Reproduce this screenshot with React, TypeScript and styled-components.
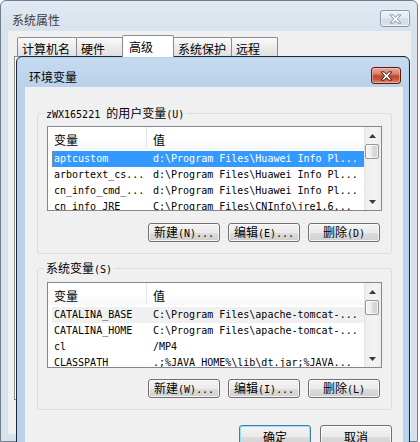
import React from "react";
import styled, { createGlobalStyle, css } from "styled-components";

const HAN = `"Noto Sans CJK SC", "Noto Sans CJK JP", sans-serif`;
const MONO = `"DejaVu Sans Mono", "Liberation Mono", "Noto Sans CJK SC", monospace`;

const GlobalStyle = createGlobalStyle`
  html, body { margin: 0; padding: 0; background: #ffffff; }
  body { font-family: ${HAN}; }
  * { box-sizing: border-box; }
`;

const Desktop = styled.div`
  position: relative;
  width: 420px;
  height: 442px;
  overflow: hidden;
  background: #ffffff;
`;

const windowBase = css`
  position: absolute;
  display: flex;
  flex-direction: column;
  border-radius: 6px 6px 0 0;
`;

const OuterWindow = styled.div`
  ${windowBase};
  left: 0;
  top: 0;
  width: 418px;
  height: 442px;
  border: 1px solid #6f7d8e;
  background: linear-gradient(#e2e9f2, #d8e2ed 30px, #d8e2ed);
`;

const DialogWindow = styled.div`
  ${windowBase};
  left: 16px;
  top: 56px;
  width: 394px;
  height: 440px;
  border: 1px solid #1c2b3a;
  background: linear-gradient(#c6daef, #bad2eb 30px, #bad2eb);
  box-shadow: inset 0 0 0 1px #a9d3ee;
`;

const TitleBar = styled.div`
  height: 30px;
  flex-shrink: 0;
  display: flex;
  justify-content: space-between;
  align-items: flex-start;
`;

const TitleText = styled.div<{ $top: number; $left: number; $color: string }>`
  padding-top: ${(p) => p.$top}px;
  margin-left: ${(p) => p.$left}px;
  font-family: ${HAN};
  font-size: 12px;
  line-height: 12px;
  color: ${(p) => p.$color};
  white-space: nowrap;
`;

const CloseButton = styled.div<{ $red?: boolean; $top: number; $right: number }>`
  width: 30px;
  height: 17px;
  margin-top: ${(p) => p.$top}px;
  margin-right: ${(p) => p.$right}px;
  border-radius: 3px;
  display: flex;
  align-items: center;
  justify-content: center;
  ${(p) =>
    p.$red
      ? css`
          border: 1px solid #5a1d14;
          background: linear-gradient(#eaa998, #d9806b 40%, #c4462d 52%, #c8553c 75%, #dd927e);
          box-shadow: inset 0 0 0 1px rgba(255, 210, 200, 0.45);
        `
      : css`
          border: 1px solid #8797ab;
          background: linear-gradient(#eef2f7, #e1e8f0 48%, #d3dce8 52%, #d9e1ec);
          box-shadow: inset 0 0 0 1px rgba(255, 255, 255, 0.6);
        `}
`;

const XGlyph = ({ stroke }: { stroke: string }) => (
  <svg width="13" height="10" viewBox="-1 -1 14 11">
    <polygon
      points="0,0 3.6,0 6,2.8 8.4,0 12,0 8,4.5 12,9 8.4,9 6,6.2 3.6,9 0,9 4,4.5"
      fill="#ffffff"
      stroke={stroke}
      strokeWidth="1"
      strokeLinejoin="round"
    />
  </svg>
);

const Frame = styled.div<{ $l: number; $r: number; $b: number }>`
  flex: 1;
  display: flex;
  min-height: 0;
  padding: 0 ${(p) => p.$r}px ${(p) => p.$b}px ${(p) => p.$l}px;
`;

/* ---------- outer window (系统属性) ---------- */

const OuterClient = styled.div`
  flex: 1;
  background: #f0f0f0;
  padding: 5px 6px 0 6px;
  display: flex;
  flex-direction: column;
`;

const TabStrip = styled.div`
  position: relative;
  z-index: 1;
  height: 20px;
  display: flex;
  align-items: flex-end;
  padding-left: 3px;
`;

const Tab = styled.div<{ $w: number; $selected?: boolean; $first?: boolean }>`
  width: ${(p) => p.$w}px;
  height: ${(p) => (p.$selected ? 22 : 19)}px;
  margin-left: ${(p) => (p.$first ? 0 : -1)}px;
  margin-bottom: ${(p) => (p.$selected ? -1 : 0)}px;
  border: 1px solid #898c95;
  border-bottom: none;
  border-radius: 2px 2px 0 0;
  padding: 5px 0 0 ${(p) => (p.$selected ? 6 : 4)}px;
  font-family: ${HAN};
  font-size: 12px;
  line-height: 12px;
  color: #000;
  white-space: nowrap;
  background: ${(p) => (p.$selected ? "#ffffff" : "linear-gradient(#fbfbfb, #ececec 50%, #e1e1e1)")};
  position: relative;
  z-index: ${(p) => (p.$selected ? 2 : 1)};
`;

const TabPane = styled.div`
  height: 344px;
  border: 1px solid #898c95;
  background: #ffffff;
`;

/* ---------- dialog (环境变量) ---------- */

const DialogClient = styled.div`
  flex: 1;
  background: #f0f0f0;
  padding: 20px 11px 0 12px;
  display: flex;
  flex-direction: column;
`;

const Group = styled.fieldset<{ $top: number; $gap?: number }>`
  margin: ${(p) => p.$gap ?? 0}px 0 0 0;
  padding: ${(p) => p.$top}px 9px 11px 9px;
  border: 1px solid #d5dfe5;
  border-radius: 3px;
  min-width: 0;
`;

const Legend = styled.legend`
  height: 12px;
  margin-left: -3px;
  padding: 0 2px;
  font-family: ${HAN};
  font-size: 12px;
  line-height: 12px;
  color: #000;
  white-space: nowrap;
`;

const Mono = styled.span`
  font-family: ${MONO};
  font-size: 10px;
  line-height: 12px;
`;

const Han = styled.span`
  font-family: ${HAN};
  font-size: 12px;
  line-height: 12px;
`;

const ListBox = styled.div<{ $h: number }>`
  height: ${(p) => p.$h}px;
  border: 1px solid #828790;
  background: #ffffff;
  display: grid;
  grid-template-columns: 1fr 17px;
  overflow: hidden;
`;

const ListMain = styled.div`
  min-width: 0;
  overflow: hidden;
  display: flex;
  flex-direction: column;
`;

const Header = styled.div`
  height: 22px;
  flex-shrink: 0;
  display: grid;
  grid-template-columns: 98px 1px 1fr;
  background: linear-gradient(#ffffff, #ffffff 55%, #f6f7f9);
`;

const HeaderCell = styled.div`
  padding: 7px 0 0 6px;
  font-family: ${HAN};
  font-size: 12px;
  line-height: 12px;
  color: #000;
`;

const HeaderDivider = styled.div`
  background: #e3e5e8;
  margin-bottom: 2px;
`;

const Rows = styled.div`
  padding: 2px 0 0 4px;
  display: flex;
  flex-direction: column;
`;

const Row = styled.div<{ $state?: string }>`
  height: 16px;
  flex-shrink: 0;
  display: grid;
  grid-template-columns: 99px 1fr;
  padding-left: 2px;
  font-family: ${MONO};
  font-size: 10px;
  line-height: 16px;
  color: ${(p) => (p.$state === "selected" ? "#ffffff" : "#000000")};
  background: ${(p) =>
    p.$state === "selected" ? "#3399ff" : p.$state === "hover" ? "#f0f0f0" : "transparent"};
  outline: ${(p) => (p.$state === "selected" ? "1px dotted #d07a1c" : "none")};
  outline-offset: -1px;
`;

const Cell = styled.span`
  overflow: hidden;
  white-space: pre;
`;

const ScrollBar = styled.div`
  display: flex;
  flex-direction: column;
  background: linear-gradient(to right, #e3e3e3, #eeeeee 2px, #f4f4f4 60%, #ededed);
`;

const ScrollArrow = styled.div`
  height: 17px;
  flex-shrink: 0;
  display: flex;
  align-items: center;
  justify-content: center;
`;

const ScrollTrack = styled.div`
  flex: 1;
  padding: 0 2px 0 1px;
`;

const Thumb = styled.div`
  height: 15px;
  border: 1px solid #979797;
  border-radius: 2px;
  background: linear-gradient(to right, #f6f6f6, #ebebeb 50%, #dadada 52%, #d2d2d2);
  box-shadow: inset 0 0 0 1px rgba(255, 255, 255, 0.7);
`;

const Arrow = ({ up }: { up?: boolean }) => (
  <svg width="7" height="4" viewBox="0 0 7 4">
    <polygon points={up ? "0,4 3.5,0 7,4" : "0,0 7,0 3.5,4"} fill="#3a3a3a" />
  </svg>
);

const ButtonRow = styled.div<{ $top: number; $gap: number }>`
  display: flex;
  justify-content: flex-end;
  gap: ${(p) => p.$gap}px;
  margin-top: ${(p) => p.$top}px;
  padding-right: 2px;
`;

const Button = styled.button<{ $h?: number; $default?: boolean }>`
  width: 72px;
  height: ${(p) => p.$h ?? 19}px;
  padding: 0;
  margin: 0;
  border: 1px solid ${(p) => (p.$default ? "#3c7fb1" : "#707070")};
  border-radius: 3px;
  background: linear-gradient(#f3f3f3, #ebebeb 50%, #dddddd 50%, #cfcfcf);
  box-shadow: inset 0 0 0 1px ${(p) => (p.$default ? "#9fdcf8" : "rgba(255,255,255,0.75)")};
  display: flex;
  align-items: center;
  justify-content: center;
  color: #000;
  cursor: default;
`;

const ButtonText = styled.span`
  font-family: ${MONO};
  font-size: 10px;
  line-height: 12px;
  white-space: nowrap;
`;

const Footer = styled.div`
  display: flex;
  justify-content: flex-end;
  gap: 9px;
  margin-top: 15px;
`;

type Var = { name: string; value: string; state?: string };

const userVars: Var[] = [
  { name: "aptcustom", value: "d:\\Program Files\\Huawei Info Pl...", state: "selected" },
  { name: "arbortext_cs...", value: "d:\\Program Files\\Huawei Info Pl..." },
  { name: "cn_info_cmd_...", value: "d:\\Program Files\\Huawei Info Pl..." },
  { name: "cn_info_JRE", value: "C:\\Program Files\\CNInfo\\jre1.6..." },
];

const sysVars: Var[] = [
  { name: "CATALINA_BASE", value: "C:\\Program Files\\apache-tomcat-...", state: "hover" },
  { name: "CATALINA_HOME", value: "C:\\Program Files\\apache-tomcat-..." },
  { name: "cl", value: "/MP4" },
  { name: "CLASSPATH", value: ".;%JAVA_HOME%\\lib\\dt.jar;%JAVA..." },
];

const VarList = ({ h, items }: { h: number; items: Var[] }) => (
  <ListBox $h={h}>
    <ListMain>
      <Header>
        <HeaderCell>变量</HeaderCell>
        <HeaderDivider />
        <HeaderCell>值</HeaderCell>
      </Header>
      <Rows>
        {items.map((v) => (
          <Row key={v.name} $state={v.state}>
            <Cell>{v.name}</Cell>
            <Cell>{v.value}</Cell>
          </Row>
        ))}
      </Rows>
    </ListMain>
    <ScrollBar>
      <ScrollArrow>
        <Arrow up />
      </ScrollArrow>
      <ScrollTrack>
        <Thumb />
      </ScrollTrack>
      <ScrollArrow>
        <Arrow />
      </ScrollArrow>
    </ScrollBar>
  </ListBox>
);

const ActionButtons = ({ top, keys }: { top: number; keys: [string, string, string] }) => (
  <ButtonRow $top={top} $gap={8}>
    <Button>
      <ButtonText>
        <Han>新建</Han>({keys[0]})...
      </ButtonText>
    </Button>
    <Button>
      <ButtonText>
        <Han>编辑</Han>({keys[1]})...
      </ButtonText>
    </Button>
    <Button>
      <ButtonText>
        <Han>删除</Han>({keys[2]})
      </ButtonText>
    </Button>
  </ButtonRow>
);

const tabs = [
  { label: "计算机名", w: 60 },
  { label: "硬件", w: 47 },
  { label: "高级", w: 52, selected: true },
  { label: "系统保护", w: 59 },
  { label: "远程", w: 47 },
];

export default function App() {
  return (
    <>
      <GlobalStyle />
      <Desktop>
        <OuterWindow>
          <TitleBar>
            <TitleText $top={13} $left={11} $color="#3d3d3d">
              系统属性
            </TitleText>
            <CloseButton $top={9} $right={7}>
              <XGlyph stroke="#7d8da1" />
            </CloseButton>
          </TitleBar>
          <Frame $l={7} $r={6} $b={7}>
            <OuterClient>
              <TabStrip>
                {tabs.map((t, i) => (
                  <Tab key={t.label} $w={t.w} $selected={t.selected} $first={i === 0}>
                    {t.label}
                  </Tab>
                ))}
              </TabStrip>
              <TabPane />
            </OuterClient>
          </Frame>
        </OuterWindow>

        <DialogWindow>
          <TitleBar>
            <TitleText $top={14} $left={12} $color="#000000">
              环境变量
            </TitleText>
            <CloseButton $red $top={10} $right={8}>
              <XGlyph stroke="#3a1a14" />
            </CloseButton>
          </TitleBar>
          <Frame $l={8} $r={6} $b={8}>
            <DialogClient>
              <Group $top={7}>
                <Legend>
                  <Mono>zWX165221 </Mono>的用户变量<Mono>(U)</Mono>
                </Legend>
                <VarList h={85} items={userVars} />
                <ActionButtons top={12} keys={["N", "E", "D"]} />
              </Group>
              <Group $top={8} $gap={8}>
                <Legend>
                  系统变量<Mono>(S)</Mono>
                </Legend>
                <VarList h={86} items={sysVars} />
                <ActionButtons top={11} keys={["W", "I", "L"]} />
              </Group>
              <Footer>
                <Button $h={23} $default>
                  <Han>确定</Han>
                </Button>
                <Button $h={23}>
                  <Han>取消</Han>
                </Button>
              </Footer>
            </DialogClient>
          </Frame>
        </DialogWindow>
      </Desktop>
    </>
  );
}
